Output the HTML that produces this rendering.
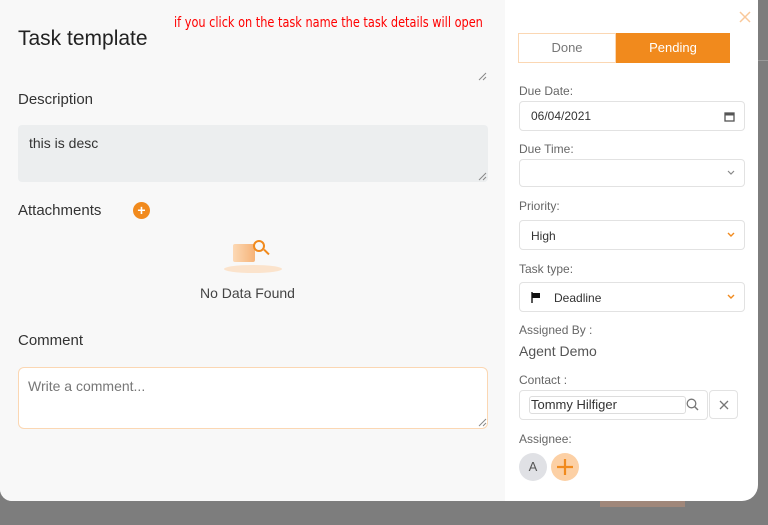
<!DOCTYPE html>
<html><head><style>
*{box-sizing:border-box;margin:0;padding:0}
body{width:768px;height:525px;background:#7d7d7d;font-family:"Liberation Sans",sans-serif;position:relative;overflow:hidden;color:#333}
.modal{position:absolute;left:0;top:0;width:758px;height:501px;background:#fff;border-radius:0 0 16px 12px;overflow:hidden}
.left{position:absolute;left:0;top:0;width:505px;height:501px;background:#f8f8f8}
.a{position:absolute;white-space:nowrap}
.lbl{font-size:12px;color:#666}
.box{position:absolute;border:1px solid #e2e2e2;border-radius:4px;background:#fff}
.chev{position:absolute;right:9px;top:50%;margin-top:-3px}
</style></head><body>
<div class="a" style="left:758px;top:60px;width:10px;height:1px;background:#999"></div>
<div class="a" style="left:600px;top:501px;width:85px;height:6px;background:#a0877a"></div>
<div class="modal">
<div class="left">
<div class="a" style="left:18px;top:27px;font-size:21px;color:#222">Task template</div>
<div class="a" style="left:174px;top:15px;font-size:14px;color:#f00;font-family:'DejaVu Sans Condensed','Liberation Sans Narrow',sans-serif;transform:scaleX(.9);transform-origin:left">if you click on the task name the task details will open</div>
<svg class="a" style="left:478px;top:72px" width="9" height="9"><path d="M1 8L8 1M5 8L8 5" stroke="#888" stroke-width="1"/></svg>
<div class="a" style="left:18px;top:91px;font-size:15px;color:#333">Description</div>
<div class="a" style="left:18px;top:125px;width:470px;height:57px;background:#eceeef;border-radius:4px"></div>
<svg class="a" style="left:478px;top:172px" width="9" height="9"><path d="M1 8L8 1M5 8L8 5" stroke="#888" stroke-width="1"/></svg>
<div class="a" style="left:29px;top:135px;font-size:14px;color:#333">this is desc</div>
<div class="a" style="left:18px;top:202px;font-size:15px;color:#333">Attachments</div>
<div class="a" style="left:133px;top:202px;width:17px;height:17px;border-radius:50%;background:#f18a1d;color:#fff;font-size:14px;font-weight:bold;line-height:17px;text-align:center">+</div>
<div class="a" style="left:224px;top:265px;width:58px;height:8px;border-radius:50%;background:#fbe3cc"></div>
<div class="a" style="left:233px;top:244px;width:22px;height:18px;background:linear-gradient(90deg,#fcd9b5,#f6b378);border-radius:2px"></div>
<div class="a" style="left:253px;top:240px;width:12px;height:12px;border:2px solid #f18a1d;border-radius:50%"></div>
<div class="a" style="left:263px;top:251px;width:7px;height:2px;background:#f18a1d;transform:rotate(45deg)"></div>
<div class="a" style="left:200px;top:285px;font-size:14px;color:#444">No Data Found</div>
<div class="a" style="left:18px;top:332px;font-size:15px;color:#333">Comment</div>
<div class="a" style="left:18px;top:367px;width:470px;height:62px;background:#fff;border:1px solid #fbd7b3;border-radius:6px"></div>
<svg class="a" style="left:478px;top:418px" width="9" height="9"><path d="M1 8L8 1M5 8L8 5" stroke="#888" stroke-width="1"/></svg>
<div class="a" style="left:28px;top:378px;font-size:14px;color:#777">Write a comment...</div>
</div>
<svg class="a" style="left:739px;top:11px" width="12" height="12"><path d="M1 1L11 11M11 1L1 11" stroke="#f9c89a" stroke-width="1.5"/></svg>
<div class="a" style="left:518px;top:33px;width:98px;height:30px;border:1px solid #fbd7b3;text-align:center;line-height:28px;font-size:13px;color:#777">Done</div>
<div class="a" style="left:616px;top:33px;width:114px;height:30px;background:#f18a1d;text-align:center;line-height:30px;font-size:13px;color:#fff">Pending</div>
<div class="a lbl" style="left:519px;top:84px">Due Date:</div>
<div class="box" style="left:519px;top:101px;width:226px;height:30px"><span class="a" style="left:11px;top:7px;font-size:12px;color:#333">06/04/2021</span><svg class="a" style="right:9px;top:9px" width="11" height="11"><rect x="1" y="2" width="9" height="8" fill="none" stroke="#555" stroke-width="1.3"/><rect x="1" y="2" width="9" height="2.5" fill="#555"/></svg></div>
<div class="a lbl" style="left:519px;top:142px">Due Time:</div>
<div class="box" style="left:519px;top:159px;width:226px;height:28px"><svg class="chev" width="8" height="6"><path d="M1 1L4 4L7 1" stroke="#888" fill="none" stroke-width="1.2"/></svg></div>
<div class="a lbl" style="left:519px;top:199px">Priority:</div>
<div class="box" style="left:519px;top:220px;width:226px;height:30px"><span class="a" style="left:11px;top:8px;font-size:12px">High</span><svg class="chev" width="8" height="6"><path d="M1 1L4 4L7 1" stroke="#f18a1d" fill="none" stroke-width="1.4"/></svg></div>
<div class="a lbl" style="left:519px;top:262px">Task type:</div>
<div class="box" style="left:519px;top:282px;width:226px;height:30px"><svg class="a" style="left:11px;top:9px" width="10" height="11"><path d="M1 0V11" stroke="#111" stroke-width="1.4"/><path d="M1.5 1H9V6H1.5Z" fill="#111"/></svg><span class="a" style="left:34px;top:8px;font-size:12px">Deadline</span><svg class="chev" width="8" height="6"><path d="M1 1L4 4L7 1" stroke="#f18a1d" fill="none" stroke-width="1.4"/></svg></div>
<div class="a lbl" style="left:519px;top:323px">Assigned By :</div>
<div class="a" style="left:519px;top:343px;font-size:14px;color:#555">Agent Demo</div>
<div class="a lbl" style="left:519px;top:373px">Contact :</div>
<div class="box" style="left:519px;top:390px;width:189px;height:30px"><span class="a" style="left:9px;top:5px;width:157px;height:18px;border:1px solid #ddd;border-radius:3px;font-size:13px;line-height:16px;padding-left:1px">Tommy Hilfiger</span><svg class="a" style="left:166px;top:7px" width="13" height="13"><circle cx="5.5" cy="5.5" r="4.3" fill="none" stroke="#777" stroke-width="1.3"/><path d="M8.5 8.5L12 12" stroke="#777" stroke-width="1.4"/></svg></div>
<div class="box" style="left:709px;top:390px;width:29px;height:29px"><svg class="a" style="left:9px;top:9px" width="10" height="10"><path d="M1 1L9 9M9 1L1 9" stroke="#777" stroke-width="1.3"/></svg></div>
<div class="a lbl" style="left:519px;top:432px">Assignee:</div>
<div class="a" style="left:519px;top:453px;width:28px;height:28px;border-radius:50%;background:#e0e1e5;text-align:center;line-height:28px;font-size:13px;color:#555">A</div>
<div class="a" style="left:551px;top:453px;width:28px;height:28px;border-radius:50%;background:#fcd0a5"><svg class="a" style="left:5px;top:5px" width="18" height="18"><path d="M9 1V17M1 9H17" stroke="#f18a1d" stroke-width="2.2"/></svg></div>
</div>
</body></html>
